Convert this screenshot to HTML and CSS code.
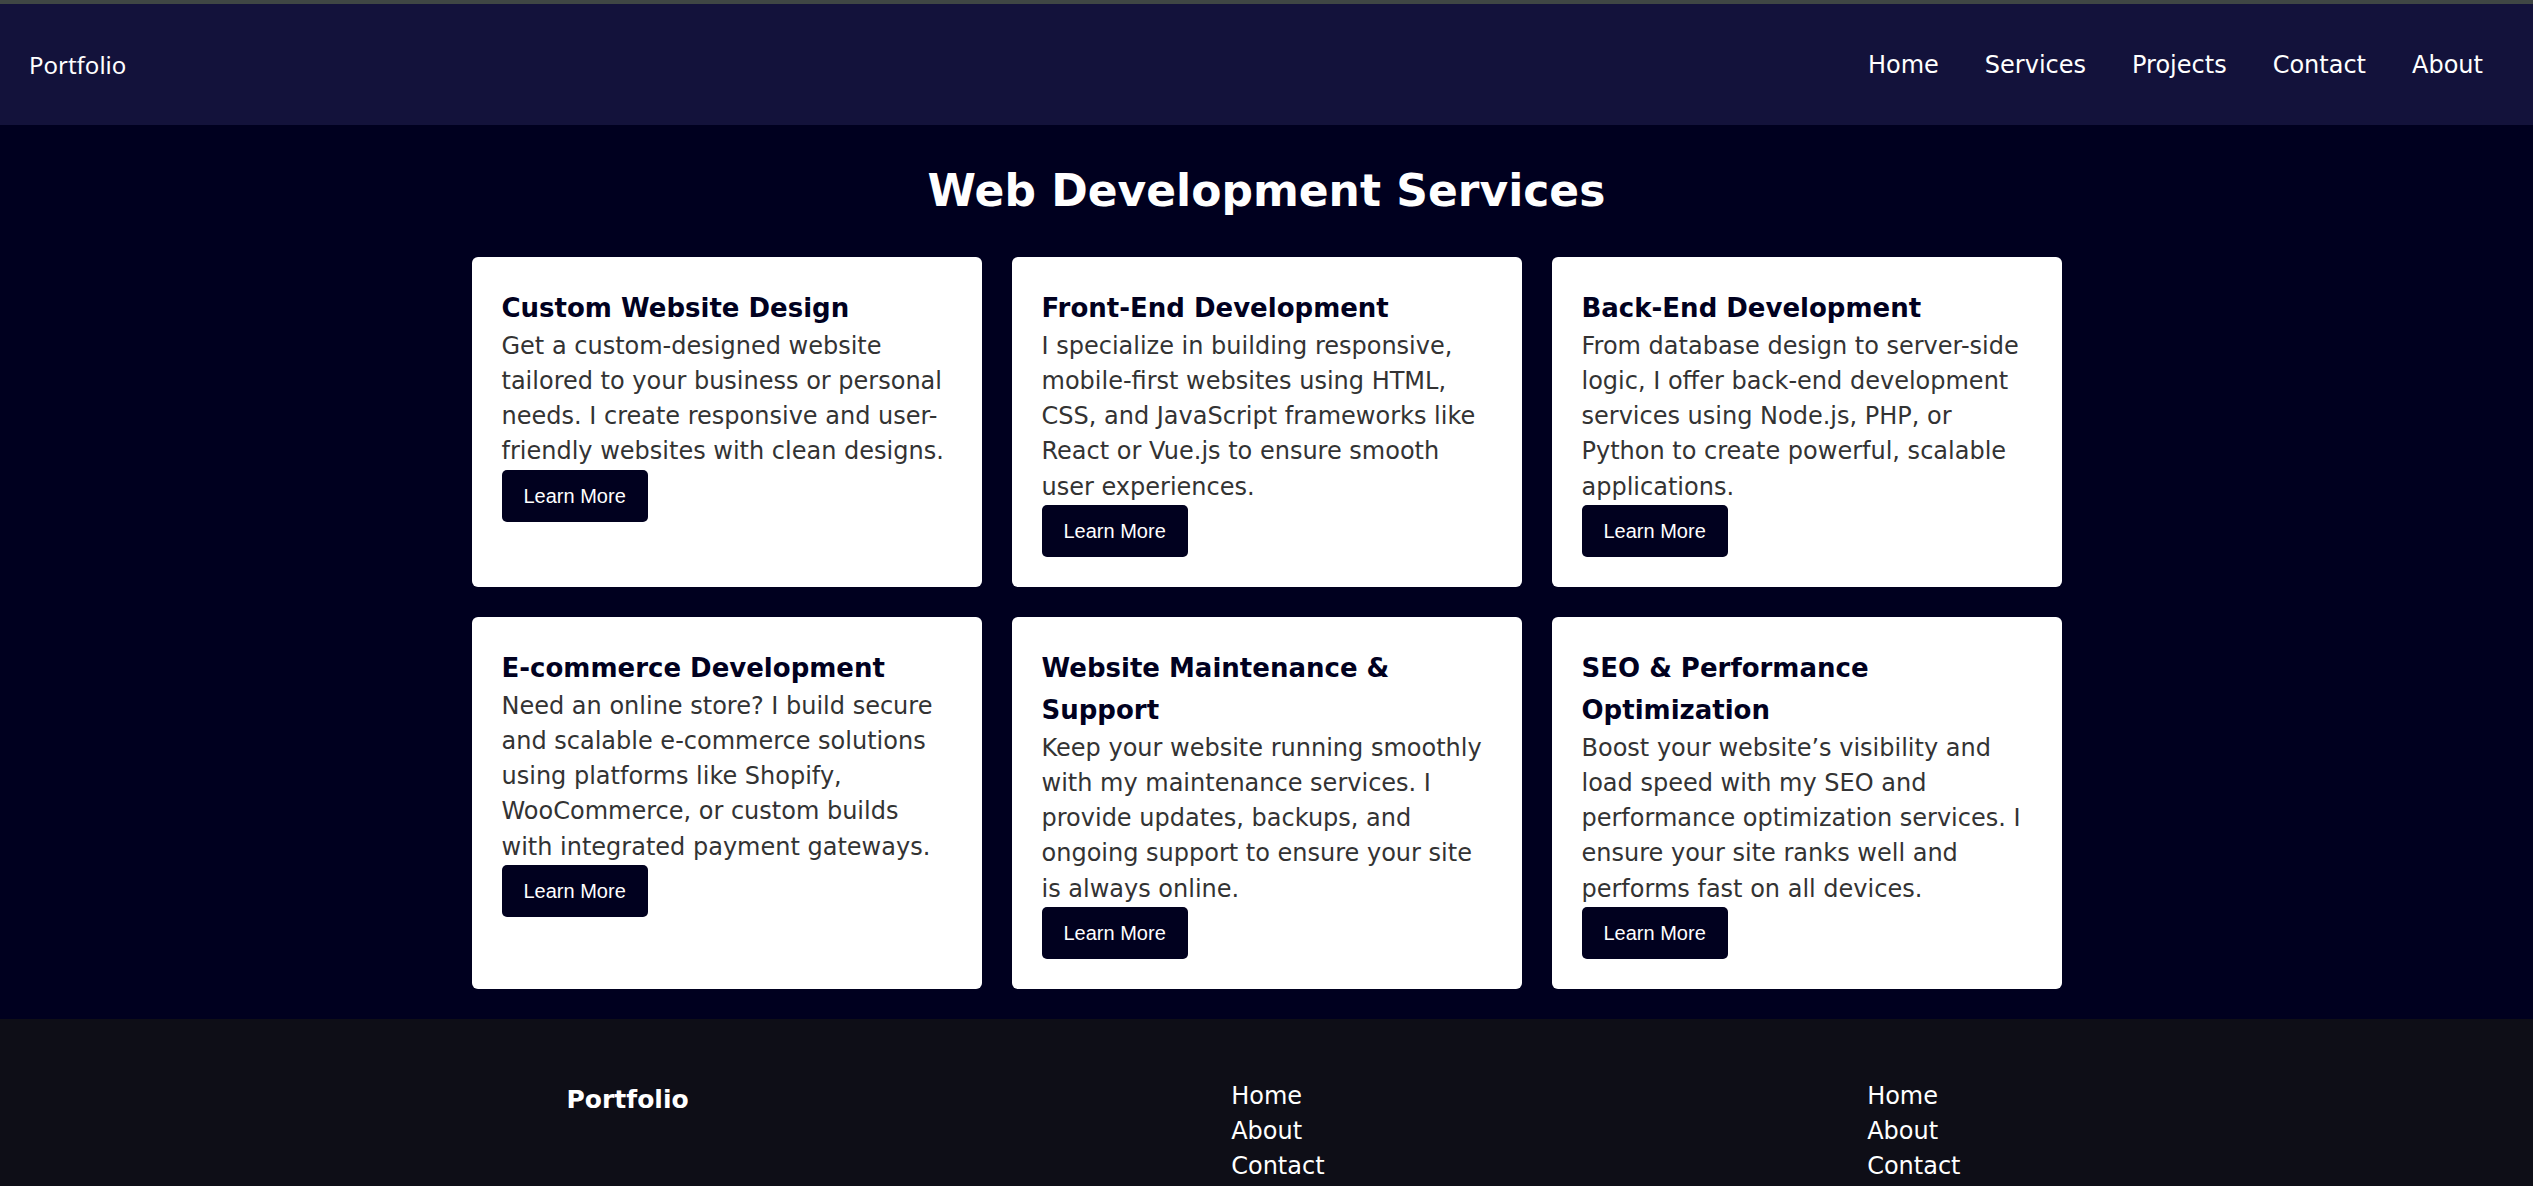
FILE: index.html
```html
<!DOCTYPE html>
<html lang="en">
<head>
<meta charset="utf-8">
<title>Web Development Services</title>
<link rel="stylesheet" href="styles.css">
</head>
<body>
<div class="topline"></div>
<header class="site-header">
  <div class="brand">Portfolio</div>
  <nav class="nav">
    <a href="#">Home</a>
    <a href="#">Services</a>
    <a href="#">Projects</a>
    <a href="#">Contact</a>
    <a href="#">About</a>
  </nav>
</header>
<main class="services">
  <h2 class="services-title">Web Development Services</h2>
  <div class="grid">
    <div class="card">
      <h3>Custom Website Design</h3>
      <p>Get a custom-designed website tailored to your business or personal needs. I create responsive and user-friendly websites with clean designs.</p>
      <button class="btn">Learn More</button>
    </div>
    <div class="card">
      <h3>Front-End Development</h3>
      <p>I specialize in building responsive, mobile-first websites using HTML, CSS, and JavaScript frameworks like React or Vue.js to ensure smooth user experiences.</p>
      <button class="btn">Learn More</button>
    </div>
    <div class="card">
      <h3>Back-End Development</h3>
      <p>From database design to server-side logic, I offer back-end development services using Node.js, PHP, or Python to create powerful, scalable applications.</p>
      <button class="btn">Learn More</button>
    </div>
    <div class="card">
      <h3>E-commerce Development</h3>
      <p>Need an online store? I build secure and scalable e-commerce solutions using platforms like Shopify, WooCommerce, or custom builds with integrated payment gateways.</p>
      <button class="btn">Learn More</button>
    </div>
    <div class="card">
      <h3>Website Maintenance &amp; Support</h3>
      <p>Keep your website running smoothly with my maintenance services. I provide updates, backups, and ongoing support to ensure your site is always online.</p>
      <button class="btn">Learn More</button>
    </div>
    <div class="card">
      <h3>SEO &amp; Performance Optimization</h3>
      <p>Boost your website’s visibility and load speed with my SEO and performance optimization services. I ensure your site ranks well and performs fast on all devices.</p>
      <button class="btn">Learn More</button>
    </div>
  </div>
</main>
<footer class="site-footer">
  <div class="footer-inner">
    <div class="footer-brand">Portfolio</div>
    <ul class="footer-links">
      <li><a href="#">Home</a></li>
      <li><a href="#">About</a></li>
      <li><a href="#">Contact</a></li>
    </ul>
    <ul class="footer-links">
      <li><a href="#">Home</a></li>
      <li><a href="#">About</a></li>
      <li><a href="#">Contact</a></li>
    </ul>
  </div>
</footer>
</body>
</html>
```
FILE: styles.css
```css
* {
  box-sizing: border-box;
}

body {
  margin: 0;
  background: #00001f;
  font-family: "DejaVu Sans", sans-serif;
  color: #ffffff;
}

.topline {
  height: 4px;
  background: #3f4644;
}

.site-header {
  height: 121px;
  background: #13123b;
  display: flex;
  align-items: center;
  justify-content: space-between;
  padding: 0 50px 0 29px;
}

.brand {
  font-family: "Noto Sans", sans-serif;
  font-size: 24px;
  color: #ffffff;
}

.nav {
  display: flex;
  gap: 46px;
}

.nav a {
  color: #ffffff;
  text-decoration: none;
  font-size: 24px;
}

.services {
  padding: 40px 0 30px;
}

.services-title {
  margin: 0 0 39px;
  text-align: center;
  font-size: 44px;
  line-height: 52.8px;
  font-weight: bold;
  color: #ffffff;
}

.grid {
  max-width: 1590px;
  margin: 0 auto;
  display: grid;
  grid-template-columns: repeat(3, 1fr);
  gap: 30px;
}

.card {
  background: #ffffff;
  border-radius: 6px;
  padding: 30px;
  display: flex;
  flex-direction: column;
  align-items: flex-start;
}

.card h3 {
  margin: 0;
  font-size: 26px;
  line-height: 42px;
  font-weight: bold;
  color: #01011f;
}

.card p {
  margin: 0;
  font-size: 24px;
  line-height: 35.2px;
  color: #333333;
}

.btn {
  font-family: "Liberation Sans", Arial, sans-serif;
  font-size: 20px;
  line-height: 24px;
  padding: 14px 22px;
  border: none;
  border-radius: 5px;
  background: #01011f;
  color: #ffffff;
  cursor: pointer;
}

.site-footer {
  background: #0e0e17;
  padding: 60px 0 60px;
}

.footer-inner {
  max-width: 1400px;
  margin: 0 auto;
  padding-right: 6px;
  display: flex;
  justify-content: space-between;
  align-items: flex-start;
}

.footer-brand {
  margin-top: 3px;
  font-size: 25px;
  line-height: 35.2px;
  font-weight: bold;
  color: #ffffff;
}

.footer-links {
  list-style: none;
  margin: 0;
  padding: 0;
}

.footer-links li {
  font-size: 24px;
  line-height: 35.2px;
}

.footer-links a {
  color: #ffffff;
  text-decoration: none;
}
```
